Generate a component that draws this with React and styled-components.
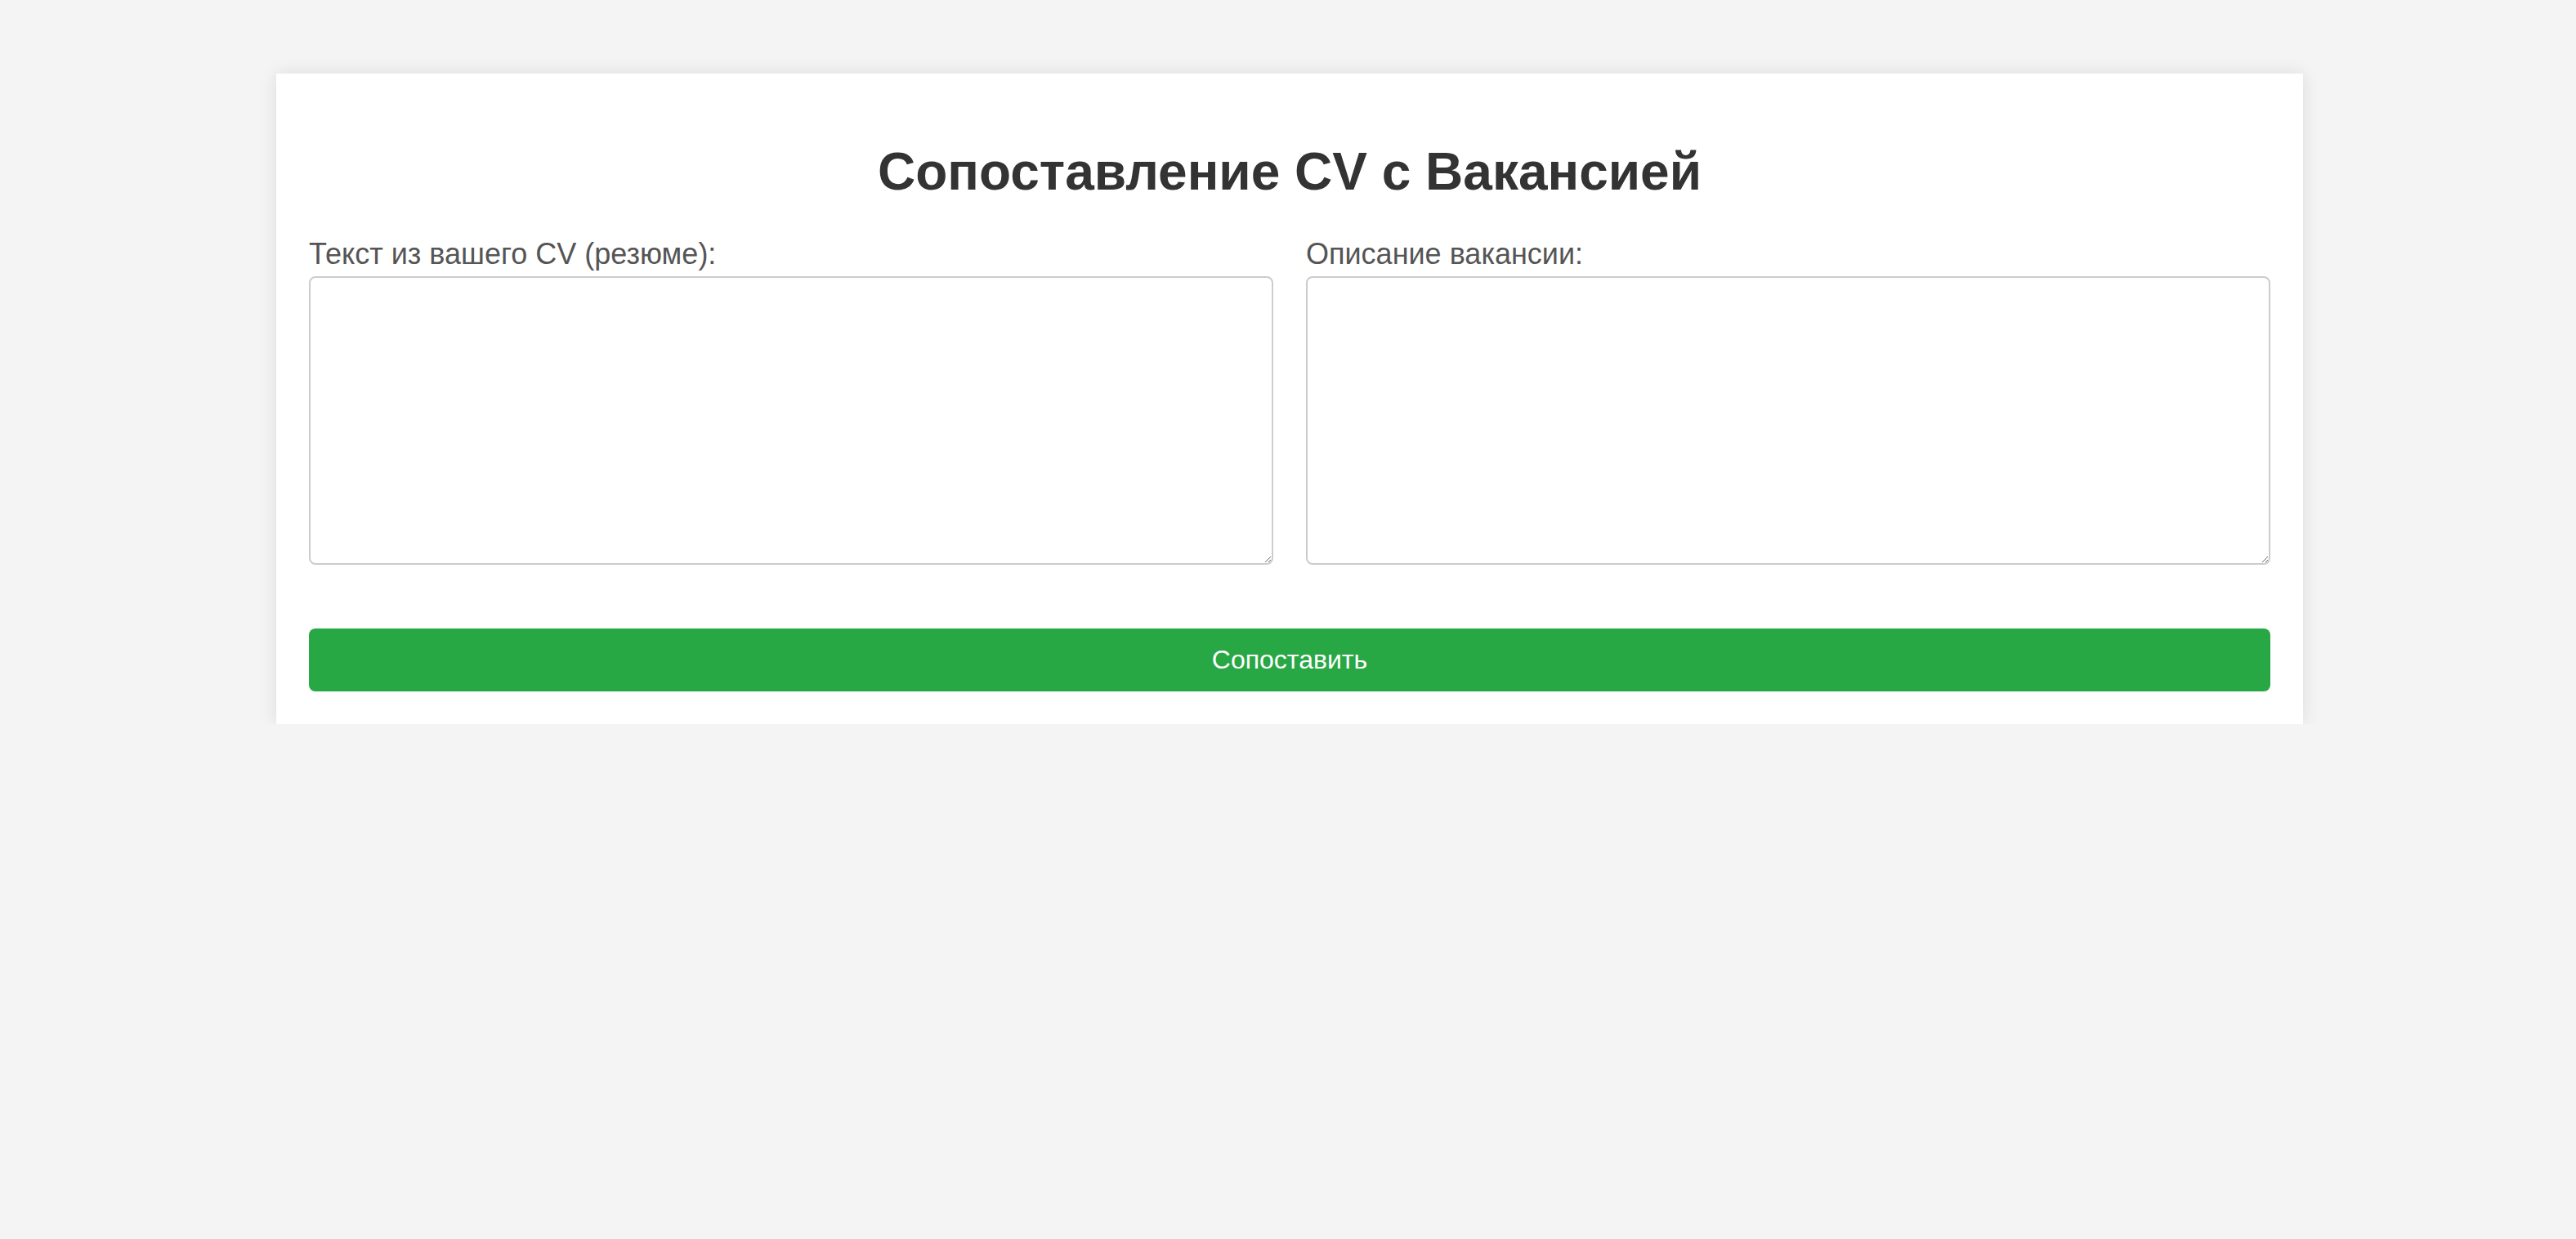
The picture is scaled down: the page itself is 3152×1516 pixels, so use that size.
import React from 'react';
import styled, { createGlobalStyle } from 'styled-components';

const GlobalStyle = createGlobalStyle`
  body {
    margin: 0;
    padding-left: 4px;
    background-color: #f4f4f4;
    font-family: 'Liberation Sans', Arial, sans-serif;
  }
`;

const Card = styled.div`
  max-width: 2400px;
  margin: 90px auto 0;
  padding: 40px;
  background-color: #fff;
  box-shadow: 0 0 20px rgba(0, 0, 0, 0.1);
`;

const Title = styled.h1`
  margin: 43px 0;
  text-align: center;
  font-size: 64px;
  font-weight: bold;
  color: #333;
`;

const Fields = styled.div`
  display: grid;
  grid-template-columns: 1fr 1fr;
  column-gap: 40px;
`;

const Field = styled.div`
  display: flex;
  flex-direction: column;
`;

const Label = styled.label`
  display: block;
  margin-bottom: 6px;
  font-size: 36px;
  color: #555;
`;

const TextArea = styled.textarea`
  display: block;
  box-sizing: border-box;
  width: 100%;
  height: 353px;
  padding: 20px;
  border: 2px solid #ccc;
  border-radius: 8px;
  font-family: inherit;
  font-size: 32px;
  outline: 0;
`;

const SubmitButton = styled.button`
  display: block;
  width: 100%;
  margin-top: 78px;
  padding: 20px;
  border: 0;
  border-radius: 8px;
  background-color: #28a745;
  color: #fff;
  font-family: inherit;
  font-size: 32px;
  cursor: pointer;
`;

const App = () => {
  return (
    <>
      <GlobalStyle />
      <Card>
        <Title>Сопоставление CV с Вакансией</Title>
        <Fields>
          <Field>
            <Label htmlFor="cv">Текст из вашего CV (резюме):</Label>
            <TextArea id="cv" />
          </Field>
          <Field>
            <Label htmlFor="job">Описание вакансии:</Label>
            <TextArea id="job" />
          </Field>
        </Fields>
        <SubmitButton type="button">Сопоставить</SubmitButton>
      </Card>
    </>
  );
};

export default App;
